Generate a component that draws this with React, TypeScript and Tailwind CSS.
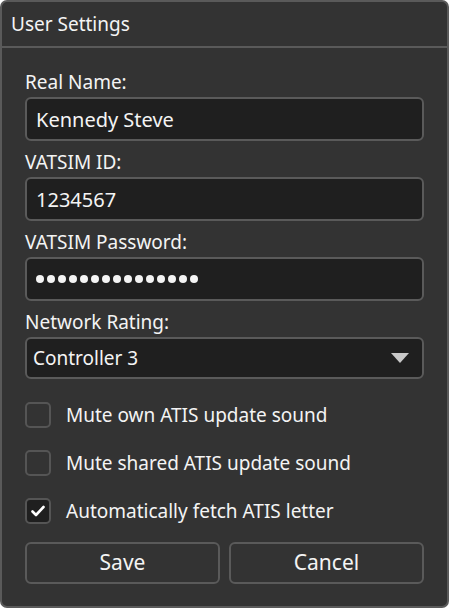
import { useState } from 'react';

function Field({ label, children }: { label: string; children: React.ReactNode }) {
  return (
    <div className="flex flex-col">
      <label className="text-[19px] leading-[24px] text-[#f4f4f4]">{label}</label>
      <div className="mt-[3px]">{children}</div>
    </div>
  );
}

function Check({ label, checked, onToggle }: { label: string; checked: boolean; onToggle: () => void }) {
  return (
    <button onClick={onToggle} className="flex items-center gap-[15px] text-left cursor-pointer">
      <span
        className={`w-[26px] h-[26px] rounded-[5px] border-2 border-[#555] flex items-center justify-center ${checked ? 'bg-[#1f1f1f]' : 'bg-transparent'}`}
      >
        {checked && (
          <svg width="14" height="12" viewBox="0 0 14 12" fill="none">
            <path d="M1.5 6.5 L5 10 L12.5 2" stroke="#fff" strokeWidth="2.6" strokeLinecap="round" strokeLinejoin="round" />
          </svg>
        )}
      </span>
      <span className="text-[19px] leading-[24px] text-[#f4f4f4]">{label}</span>
    </button>
  );
}

export default function App() {
  const [checks, setChecks] = useState([false, false, true]);
  const toggle = (i: number) => setChecks(c => c.map((v, j) => (j === i ? !v : v)));
  const inputCls =
    'w-full h-[44px] rounded-[6px] border-2 border-[#5a5a5a] bg-[#1f1f1f] px-[9px] text-[20px] text-[#f4f4f4] outline-none';

  return (
    <div className="w-[450px] h-[609px] bg-white font-['Noto_Sans',sans-serif]">
      <div className="w-[449px] h-[608px] rounded-[7px] border-2 border-[#5a5a5a] bg-[#333333] flex flex-col overflow-hidden">
        <div className="h-[46px] shrink-0 border-b-2 border-[#5a5a5a] flex items-center pl-[9px] text-[19px] text-[#f4f4f4]">
          User Settings
        </div>
        <div className="flex-1 flex flex-col px-[23px] pt-[22px]">
          <div className="flex flex-col gap-[9px]">
            <Field label="Real Name:">
              <input className={inputCls} defaultValue="Kennedy Steve" />
            </Field>
            <Field label="VATSIM ID:">
              <input className={inputCls} defaultValue="1234567" />
            </Field>
            <Field label="VATSIM Password:">
              <div className="w-full h-[44px] rounded-[6px] border-2 border-[#5a5a5a] bg-[#1f1f1f] px-[9px] flex items-center gap-[3px]">
                {Array.from({ length: 15 }).map((_, i) => (
                  <span key={i} className="w-[8px] h-[8px] rounded-full bg-[#f4f4f4]" />
                ))}
              </div>
            </Field>
            <Field label="Network Rating:">
              <div className="w-full h-[42px] rounded-[6px] border-2 border-[#5a5a5a] bg-[#1f1f1f] flex items-center pl-[6px] pr-[13px] text-[19px] text-[#f4f4f4]">
                <span className="flex-1">Controller 3</span>
                <svg width="18" height="10" viewBox="0 0 18 10">
                  <path d="M0 0 H18 L9 10 Z" fill="#c8c8c8" />
                </svg>
              </div>
            </Field>
          </div>
          <div className="flex flex-col gap-[22px] mt-[23px]">
            <Check label="Mute own ATIS update sound" checked={checks[0]} onToggle={() => toggle(0)} />
            <Check label="Mute shared ATIS update sound" checked={checks[1]} onToggle={() => toggle(1)} />
            <Check label="Automatically fetch ATIS letter" checked={checks[2]} onToggle={() => toggle(2)} />
          </div>
          <div className="grid grid-cols-2 gap-[9px] mt-[18px]">
            <button className="h-[42px] rounded-[6px] border-2 border-[#5a5a5a] text-[21px] text-[#f4f4f4]">Save</button>
            <button className="h-[42px] rounded-[6px] border-2 border-[#5a5a5a] text-[21px] text-[#f4f4f4]">Cancel</button>
          </div>
        </div>
      </div>
    </div>
  );
}
